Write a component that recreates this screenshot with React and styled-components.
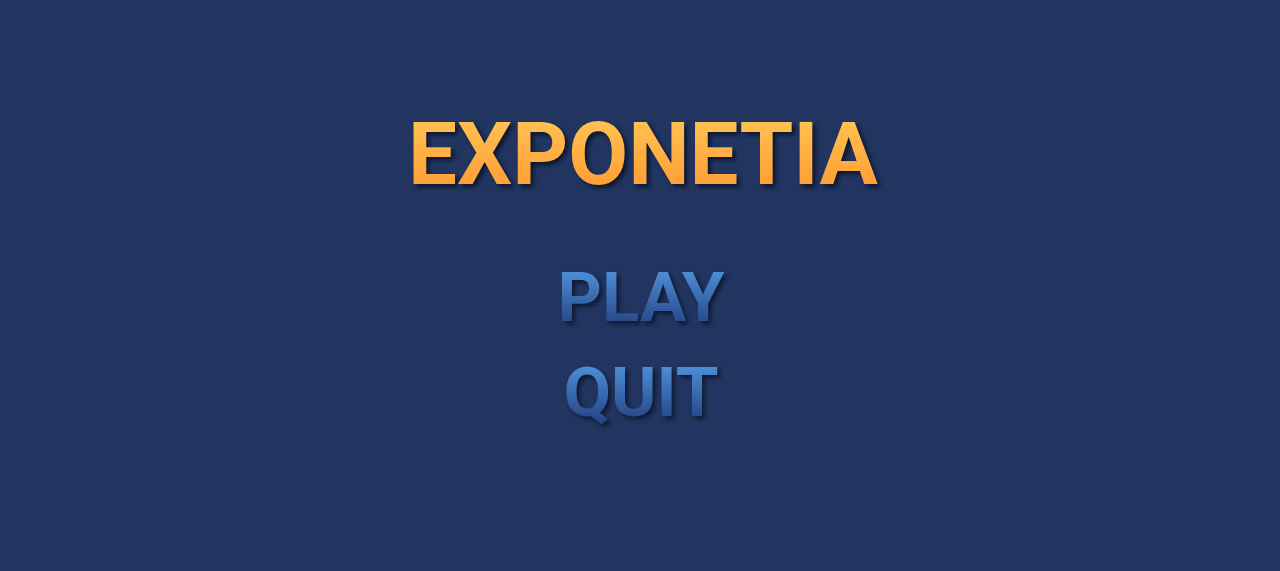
import styled, { createGlobalStyle } from 'styled-components'

const GlobalStyle = createGlobalStyle`
    body {
        margin: 0;
        background: #213560;
        font-family: Roboto, 'Liberation Sans', sans-serif;
    }
`

const Screen = styled.main`
    display: flex;
    flex-direction: column;
    align-items: center;
    min-height: 100vh;
    padding: 102px 0 0 6px;
    box-sizing: border-box;
`

const Title = styled.h1`
    margin: 0 0 49px;
    font-size: 87px;
    line-height: 104px;
    font-weight: 700;
    color: transparent;
    background: linear-gradient(#ffc04f 20%, #ff9f38 80%);
    background-clip: text;
    filter: drop-shadow(3px 3px 2px rgba(8, 14, 32, 0.8));
`

const Menu = styled.nav`
    display: flex;
    flex-direction: column;
    align-items: center;
    gap: 10px;
    padding-right: 4px;
`

const MenuButton = styled.button`
    padding: 0;
    border: none;
    font-family: inherit;
    font-size: 69px;
    line-height: 85px;
    font-weight: 700;
    color: transparent;
    background: linear-gradient(#4c8dd6 20%, #28488a 80%);
    background-clip: text;
    filter: drop-shadow(3px 3px 2px rgba(8, 14, 32, 0.7));
    cursor: pointer;
`

const App = () => {
    return(
        <>
            <GlobalStyle />
            <Screen>
                <Title>EXPONETIA</Title>
                <Menu>
                    <MenuButton type='button'>PLAY</MenuButton>
                    <MenuButton type='button'>QUIT</MenuButton>
                </Menu>
            </Screen>
        </>
    )
}

export default App
